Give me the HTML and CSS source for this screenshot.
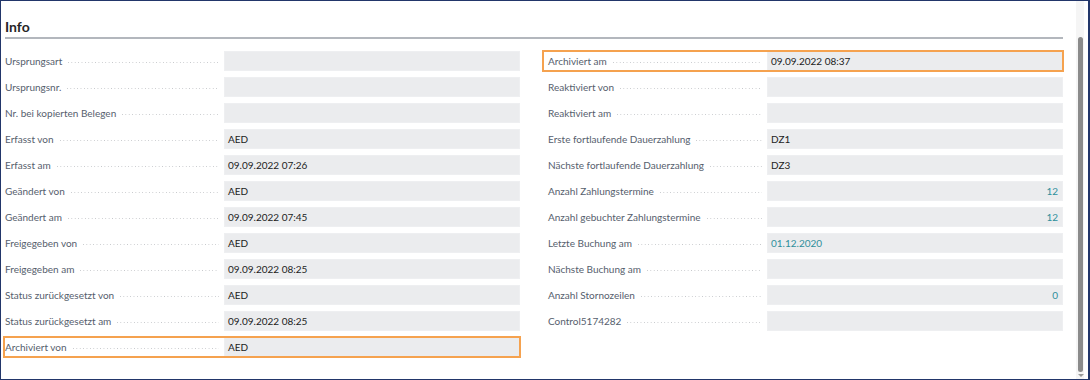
FILE: index.html
```html
<!DOCTYPE html>
<html lang="de">
<head>
  <meta charset="UTF-8" />
  <meta name="viewport" content="width=device-width, initial-scale=1.0"/>
  <title>Info</title>
  <link rel="stylesheet" href="styles.css">
</head>
<body>

  <div class="frame">
    <div class="content">
      <h2 class="caption">Info</h2>

      <div class="grid">
        <div class="col left">
          <div class="row"><div class="label"><span>Ursprungsart</span><i class="dots"></i></div><div class="field"></div></div>
          <div class="row"><div class="label"><span>Ursprungsnr.</span><i class="dots"></i></div><div class="field"></div></div>
          <div class="row"><div class="label"><span>Nr. bei kopierten Belegen</span><i class="dots"></i></div><div class="field"></div></div>
          <div class="row"><div class="label"><span>Erfasst von</span><i class="dots"></i></div><div class="field">AED</div></div>
          <div class="row"><div class="label"><span>Erfasst am</span><i class="dots"></i></div><div class="field">09.09.2022 07:26</div></div>
          <div class="row"><div class="label"><span>Geändert von</span><i class="dots"></i></div><div class="field">AED</div></div>
          <div class="row"><div class="label"><span>Geändert am</span><i class="dots"></i></div><div class="field">09.09.2022 07:45</div></div>
          <div class="row"><div class="label"><span>Freigegeben von</span><i class="dots"></i></div><div class="field">AED</div></div>
          <div class="row"><div class="label"><span>Freigegeben am</span><i class="dots"></i></div><div class="field">09.09.2022 08:25</div></div>
          <div class="row"><div class="label"><span>Status zurückgesetzt von</span><i class="dots"></i></div><div class="field">AED</div></div>
          <div class="row"><div class="label"><span>Status zurückgesetzt am</span><i class="dots"></i></div><div class="field">09.09.2022 08:25</div></div>
          <div class="row marked"><div class="label"><span>Archiviert von</span><i class="dots"></i></div><div class="field">AED</div></div>
        </div>

        <div class="col right">
          <div class="row marked"><div class="label"><span>Archiviert am</span><i class="dots"></i></div><div class="field">09.09.2022 08:37</div></div>
          <div class="row"><div class="label"><span>Reaktiviert von</span><i class="dots"></i></div><div class="field"></div></div>
          <div class="row"><div class="label"><span>Reaktiviert am</span><i class="dots"></i></div><div class="field"></div></div>
          <div class="row"><div class="label"><span>Erste fortlaufende Dauerzahlung</span><i class="dots"></i></div><div class="field">DZ1</div></div>
          <div class="row"><div class="label"><span>Nächste fortlaufende Dauerzahlung</span><i class="dots"></i></div><div class="field">DZ3</div></div>
          <div class="row"><div class="label"><span>Anzahl Zahlungstermine</span><i class="dots"></i></div><div class="field num link">12</div></div>
          <div class="row"><div class="label"><span>Anzahl gebuchter Zahlungstermine</span><i class="dots"></i></div><div class="field num link">12</div></div>
          <div class="row"><div class="label"><span>Letzte Buchung am</span><i class="dots"></i></div><div class="field link">01.12.2020</div></div>
          <div class="row"><div class="label"><span>Nächste Buchung am</span><i class="dots"></i></div><div class="field"></div></div>
          <div class="row"><div class="label"><span>Anzahl Stornozeilen</span><i class="dots"></i></div><div class="field num link">0</div></div>
          <div class="row"><div class="label"><span>Control5174282</span><i class="dots"></i></div><div class="field"></div></div>
        </div>
      </div>
    </div>

    <div class="scroll">
      <div class="thumb"></div>
      <div class="arrow"></div>
    </div>
  </div>

</body>
</html>
```

FILE: styles.css
```css
* { box-sizing: border-box; }
body {
  margin: 0;
  font-family: Lato, "Noto Sans", sans-serif;
  font-size: 10px;
  color: #1c1c1c;
  background: #fff;
}

.frame {
  display: flex;
  width: 1090px;
  height: 380px;
  border: 1px solid #22366a;
  border-right-width: 2px;
  padding-right: 4px;
}

.content {
  flex: 1;
  padding: 0 13px 0 3px;
}

.caption {
  margin: 16px 0 0 1px;
  padding-bottom: 1px;
  font-size: 14px;
  font-weight: 700;
  line-height: 19px;
  color: #262626;
  border-bottom: 2px solid #b3b7bd;
}

.grid {
  display: grid;
  grid-template-columns: 516px 1fr;
  column-gap: 23px;
  margin-top: 12px;
}
.col {
  display: flex;
  flex-direction: column;
  gap: 6px;
}

.row {
  display: flex;
  height: 20px;
}
.label {
  display: flex;
  align-items: center;
  color: #56606d;
  white-space: nowrap;
}
.left .label { width: 220px; padding-left: 1px; }
.right .label { width: 224px; padding-left: 5px; }

.dots {
  flex: 1;
  height: 1px;
  margin: 2px 5px 0 6px;
  background: linear-gradient(to right, #c6c8cb 1px, transparent 1px) 0 0 / 3.4px 1px repeat-x;
}

.field {
  flex: 1;
  background: #ebecee;
  border: 1px solid #eeeff1;
  padding: 0 4px 0 3px;
  line-height: 18px;
  white-space: nowrap;
}
.field.num { text-align: right; }
.field.link { color: #2f8f9c; }

.row.marked {
  outline: 2px solid #f5a24f;
  outline-offset: -1px;
}

.scroll {
  width: 8px;
  background: #f5f5f5;
  padding: 36px 1px 0 2px;
  display: flex;
  flex-direction: column;
  align-items: center;
}
.thumb {
  width: 5px;
  height: 335px;
  background: #8b8b8b;
  border-radius: 3px;
}
.arrow {
  margin-top: 2px;
  width: 0;
  height: 0;
  border-left: 3px solid transparent;
  border-right: 3px solid transparent;
  border-top: 3px solid #9a9a9a;
}
```
